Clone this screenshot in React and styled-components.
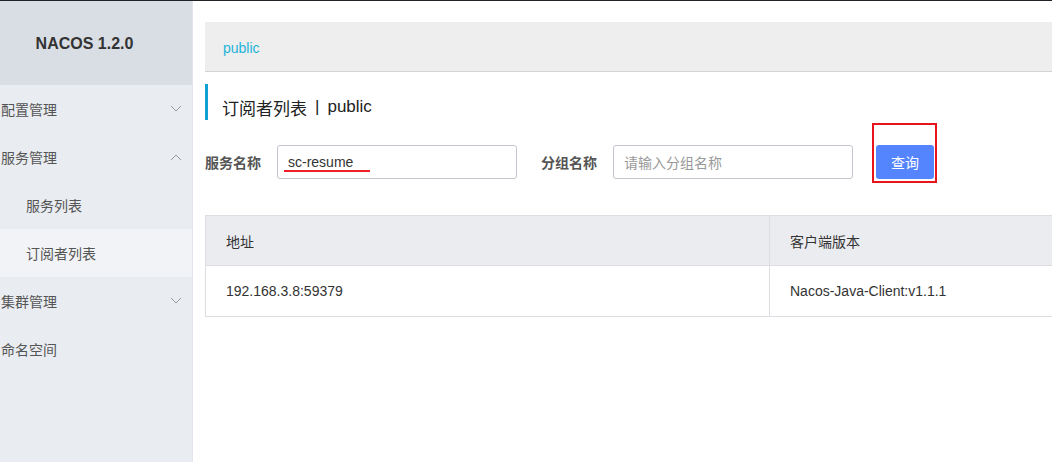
import React from "react";
import styled, { createGlobalStyle } from "styled-components";

const GlobalStyle = createGlobalStyle`
  body {
    margin: 0;
    font-family: "Liberation Sans", "Noto Sans CJK SC", sans-serif;
    font-size: 14px;
    color: #333;
    background: #fff;
  }
  * { box-sizing: border-box; }
`;

const Layout = styled.div`
  display: flex;
  height: 462px;
  border-top: 1px solid #1f2327;
  overflow: hidden;
`;

const Sidebar = styled.div`
  width: 193px;
  flex-shrink: 0;
  background: #e9ecf1;
  border-right: 1px solid #e2e6ec;
`;

const Logo = styled.div`
  height: 84px;
  background: #d9dde4;
  display: flex;
  align-items: center;
  justify-content: center;
  padding-right: 23px;
  padding-top: 2px;
  font-size: 16px;
  font-weight: bold;
  color: #333;
`;

const MenuItem = styled.div`
  height: 48px;
  display: flex;
  align-items: center;
  justify-content: space-between;
  padding: 0 10px 0 ${(p) => (p.sub ? "26px" : "1px")};
  background: ${(p) => (p.active ? "#f1f3f6" : "transparent")};
  color: #555;
  font-size: 14px;
`;

const Chevron = ({ up }) => (
  <svg width="12" height="8" viewBox="0 0 12 8" fill="none" stroke="#999" strokeWidth="1">
    {up ? <path d="M1 7 L6 2 L11 7" /> : <path d="M1 1 L6 6 L11 1" />}
  </svg>
);

const Main = styled.div`
  flex: 1;
  padding: 21px 0 0 12px;
  min-width: 0;
`;

const Breadcrumb = styled.div`
  height: 50px;
  background: #eeeeee;
  border-bottom: 1px solid #d4d4d4;
  display: flex;
  align-items: center;
  padding: 2px 0 0 18px;
  color: #1db4d9;
  font-size: 14px;
`;

const Title = styled.div`
  margin-top: 12px;
  height: 36px;
  border-left: 3px solid #0fa0d4;
  padding: 10px 0 0 14px;
  display: flex;
  align-items: center;
  font-size: 17px;
  color: #222;
  gap: 8px;
`;

const Form = styled.div`
  display: flex;
  align-items: center;
  margin-top: 24px;
  height: 35px;
`;

const Label = styled.span`
  color: #555;
  font-weight: bold;
  font-size: 14px;
  margin-left: ${(p) => p.gap || 0}px;
  margin-right: 16px;
`;

const InputBox = styled.div`
  position: relative;
  width: 240px;
  height: 34px;
  border: 1px solid #c4c6cf;
  border-radius: 3px;
  display: flex;
  align-items: center;
  padding-left: 10px;
  font-size: 14px;
  color: ${(p) => (p.placeholder ? "#999" : "#333")};
`;

const Underline = styled.span`
  position: absolute;
  left: 6px;
  bottom: 6px;
  width: 86px;
  height: 2px;
  background: #f0202a;
`;

const ButtonWrap = styled.div`
  position: relative;
  margin-left: 23px;
`;

const Button = styled.button`
  width: 58px;
  height: 34px;
  border: none;
  border-radius: 3px;
  background: #5584ff;
  color: #fff;
  font-size: 14px;
  font-family: inherit;
  padding: 0;
`;

const Marker = styled.span`
  position: absolute;
  left: -4px;
  top: -22px;
  width: 65px;
  height: 60px;
  border: 2px solid #e8141c;
`;

const Table = styled.div`
  margin-top: 36px;
  border: 1px solid #dcdee3;
  border-right: none;
`;

const Row = styled.div`
  display: grid;
  grid-template-columns: 563px 1fr;
  height: 50px;
  background: ${(p) => (p.head ? "#ebecf0" : "#fff")};
  border-bottom: ${(p) => (p.head ? "1px solid #dcdee3" : "none")};
`;

const Cell = styled.div`
  display: flex;
  align-items: center;
  padding-left: 20px;
  font-size: 14px;
  color: #333;
  & + & {
    border-left: 1px solid #dcdee3;
  }
`;

export default function App() {
  return (
    <>
      <GlobalStyle />
      <Layout>
        <Sidebar>
          <Logo>NACOS 1.2.0</Logo>
          <MenuItem>配置管理<Chevron /></MenuItem>
          <MenuItem>服务管理<Chevron up /></MenuItem>
          <MenuItem sub>服务列表</MenuItem>
          <MenuItem sub active>订阅者列表</MenuItem>
          <MenuItem>集群管理<Chevron /></MenuItem>
          <MenuItem>命名空间</MenuItem>
        </Sidebar>
        <Main>
          <Breadcrumb>public</Breadcrumb>
          <Title>
            <span>订阅者列表</span>
            <span>|</span>
            <span>public</span>
          </Title>
          <Form>
            <Label>服务名称</Label>
            <InputBox>
              sc-resume
              <Underline />
            </InputBox>
            <Label gap={24}>分组名称</Label>
            <InputBox placeholder>请输入分组名称</InputBox>
            <ButtonWrap>
              <Button>查询</Button>
              <Marker />
            </ButtonWrap>
          </Form>
          <Table>
            <Row head>
              <Cell>地址</Cell>
              <Cell>客户端版本</Cell>
            </Row>
            <Row>
              <Cell>192.168.3.8:59379</Cell>
              <Cell>Nacos-Java-Client:v1.1.1</Cell>
            </Row>
          </Table>
        </Main>
      </Layout>
    </>
  );
}
